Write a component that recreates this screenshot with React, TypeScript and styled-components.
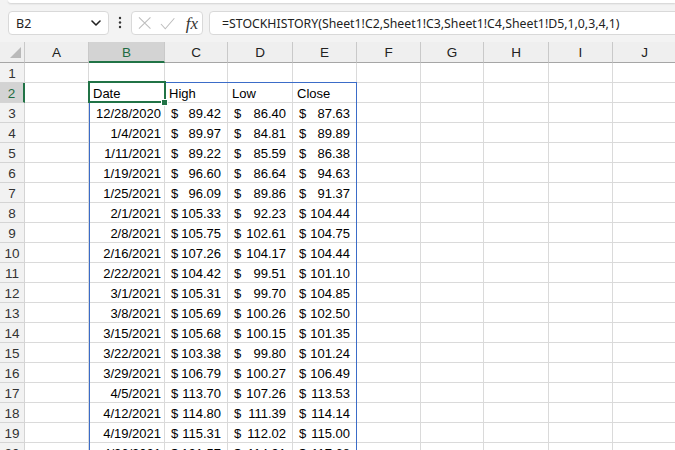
import React from "react";
import styled, { createGlobalStyle } from "styled-components";

const GlobalStyle = createGlobalStyle`
  html, body {
    margin: 0;
    padding: 0;
    background: #f3f3f3;
    overflow: hidden;
  }
`;

// column widths in px, corner first, then A..J
const COLS = [25, 64, 76, 63, 65, 64, 64, 63, 65, 64, 64];
const LETTERS = ["A", "B", "C", "D", "E", "F", "G", "H", "I", "J"];
const VISIBLE_ROWS = 20;

type Quote = [string, number, number, number];

const quotes: Quote[] = [
    ["12/28/2020", 89.42, 86.4, 87.63],
    ["1/4/2021", 89.97, 84.81, 89.89],
    ["1/11/2021", 89.22, 85.59, 86.38],
    ["1/19/2021", 96.6, 86.64, 94.63],
    ["1/25/2021", 96.09, 89.86, 91.37],
    ["2/1/2021", 105.33, 92.23, 104.44],
    ["2/8/2021", 105.75, 102.61, 104.75],
    ["2/16/2021", 107.26, 104.17, 104.44],
    ["2/22/2021", 104.42, 99.51, 101.1],
    ["3/1/2021", 105.31, 99.7, 104.85],
    ["3/8/2021", 105.69, 100.26, 102.5],
    ["3/15/2021", 105.68, 100.15, 101.35],
    ["3/22/2021", 103.38, 99.8, 101.24],
    ["3/29/2021", 106.79, 100.27, 106.49],
    ["4/5/2021", 113.7, 107.26, 113.53],
    ["4/12/2021", 114.8, 111.39, 114.14],
    ["4/19/2021", 115.31, 112.02, 115.0],
    ["4/26/2021", 121.57, 114.91, 117.68],
];

const Window = styled.div`
  width: 675px;
  height: 450px;
  overflow: hidden;
  display: flex;
  flex-direction: column;
  background: #f3f3f3;
`;

const RibbonEdge = styled.div`
  height: 3px;
  margin-left: 8px;
  background: #ffffff;
  border-bottom-left-radius: 6px;
  box-shadow: 0 1px 2px rgba(0, 0, 0, 0.14);
`;

const FormulaBar = styled.div`
  height: 39px;
  display: flex;
  align-items: flex-start;
  padding: 8px 0 0 8px;
  box-sizing: border-box;
  font-family: "Noto Sans", "Open Sans", sans-serif;
  color: #222;
`;

const Field = styled.div`
  height: 24px;
  box-sizing: border-box;
  background: #fff;
  border: 1px solid #d9d9d9;
  border-radius: 4px;
  display: flex;
  align-items: center;
`;

const NameBox = styled(Field)`
  width: 101px;
  padding: 0 7px 0 7px;
  justify-content: space-between;
  font-size: 12.5px;
`;

const Dots = styled.div`
  width: 22px;
  height: 24px;
  display: flex;
  align-items: center;
  justify-content: center;
`;

const ActionBox = styled(Field)`
  width: 72px;
  padding: 0 4px 0 6px;
  gap: 9px;
  margin-right: 6px;
`;

const Fx = styled.span`
  font-family: "Liberation Serif", "DejaVu Serif", serif;
  font-style: italic;
  font-size: 17px;
  color: #333;
  margin-left: 1px;
  line-height: 1;
`;

const FormulaInput = styled(Field)`
  flex: 1;
  margin-right: -8px;
  padding-left: 12px;
  font-size: 12.3px;
  white-space: nowrap;
`;

const Sheet = styled.div`
  position: relative;
  flex: 1;
  background: #fff;
  overflow: hidden;
`;

const Grid = styled.div<{ $cols: string }>`
  display: grid;
  grid-template-columns: ${(p) => p.$cols};
  grid-template-rows: 21px;
  grid-auto-rows: 20px;
  font-family: "Liberation Sans", Arial, sans-serif;
  font-size: 13px;
  color: #000;
`;

const Corner = styled.div`
  position: relative;
  background: #efefef;
  border-right: 1px solid #c9c9c9;
  border-bottom: 1px solid #a6a6a6;
  box-sizing: border-box;

  &::after {
    content: "";
    position: absolute;
    right: 3px;
    bottom: 4px;
    border-style: solid;
    border-width: 0 0 11px 11px;
    border-color: transparent transparent #b9b9b9 transparent;
  }
`;

const ColHeader = styled.div<{ $selected?: boolean }>`
  box-sizing: border-box;
  background: ${(p) => (p.$selected ? "#d3d3d3" : "#efefef")};
  color: ${(p) => (p.$selected ? "#1e6b41" : "#222")};
  border-right: 1px solid #c9c9c9;
  border-bottom: ${(p) => (p.$selected ? "2px solid #217346" : "1px solid #a6a6a6")};
  font-size: 13.5px;
  display: flex;
  justify-content: center;
  align-items: center;
  padding-top: 1px;
`;

const RowHeader = styled.div<{ $selected?: boolean }>`
  box-sizing: border-box;
  background: ${(p) => (p.$selected ? "#d3d3d3" : "#f2f2f2")};
  color: ${(p) => (p.$selected ? "#1e6b41" : "#333")};
  border-right: ${(p) => (p.$selected ? "2px solid #217346" : "1px solid #d4d4d4")};
  border-bottom: 1px solid #d4d4d4;
  font-size: 13.5px;
  display: flex;
  justify-content: center;
  align-items: center;
  padding-top: 2px;
`;

const Cell = styled.div<{ $align?: "left" | "right" }>`
  box-sizing: border-box;
  border-right: 1px solid #dadada;
  border-bottom: 1px solid #dadada;
  display: flex;
  align-items: center;
  justify-content: ${(p) => (p.$align === "right" ? "flex-end" : "flex-start")};
  padding: 2px 3px 0 4px;
  white-space: nowrap;
  overflow: hidden;
`;

const MoneyCell = styled(Cell)`
  justify-content: space-between;
  gap: 2px;
  padding: 2px 6px 0 6px;
`;

const Spill = styled.div`
  position: absolute;
  left: 89px;
  top: 40px;
  width: 268px;
  height: 500px;
  box-sizing: border-box;
  border: 1px solid #3b6cc8;
  pointer-events: none;
`;

const ActiveCell = styled.div`
  position: absolute;
  left: 88px;
  top: 39px;
  width: 78px;
  height: 22px;
  box-sizing: border-box;
  border: 2px solid #217346;
  pointer-events: none;
`;

const FillHandle = styled.div`
  position: absolute;
  left: 161px;
  top: 57px;
  width: 5px;
  height: 5px;
  background: #217346;
  border: 1px solid #fff;
`;

const Chevron = () => (
    <svg width="10" height="6" viewBox="0 0 10 6">
        <path d="M1 1l4 4 4-4" fill="none" stroke="#222" strokeWidth="1.6" strokeLinecap="round" strokeLinejoin="round" />
    </svg>
);

const VDots = () => (
    <svg width="4" height="14" viewBox="0 0 4 14">
        <circle cx="2" cy="2" r="1.2" fill="#333" />
        <circle cx="2" cy="6.5" r="1.2" fill="#333" />
        <circle cx="2" cy="11" r="1.2" fill="#333" />
    </svg>
);

const Cancel = () => (
    <svg width="14" height="14" viewBox="0 0 14 14">
        <path d="M1 1l12 12M13 1L1 13" stroke="#bdbdbd" strokeWidth="1.1" fill="none" />
    </svg>
);

const Enter = () => (
    <svg width="16" height="13" viewBox="0 0 16 13">
        <path d="M1 7l4.5 5L15 1" stroke="#bdbdbd" strokeWidth="1.1" fill="none" />
    </svg>
);

const money = (v: number) => v.toFixed(2);

const App = () => {
    const cols = COLS.map((w) => `${w}px`).join(" ");

    const renderRow = (r: number) => {
        const cells: React.ReactNode[] = [];
        cells.push(
            <RowHeader key="h" $selected={r === 2}>
                {r}
            </RowHeader>
        );
        LETTERS.forEach((letter) => {
            const key = `${letter}${r}`;
            if (r === 2 && letter === "B") cells.push(<Cell key={key}>Date</Cell>);
            else if (r === 2 && letter === "C") cells.push(<Cell key={key}>High</Cell>);
            else if (r === 2 && letter === "D") cells.push(<Cell key={key}>Low</Cell>);
            else if (r === 2 && letter === "E") cells.push(<Cell key={key}>Close</Cell>);
            else if (r >= 3 && "BCDE".includes(letter) && quotes[r - 3]) {
                const q = quotes[r - 3];
                if (letter === "B") {
                    cells.push(
                        <Cell key={key} $align="right">
                            {q[0]}
                        </Cell>
                    );
                } else {
                    const v = q["CDE".indexOf(letter) + 1] as number;
                    cells.push(
                        <MoneyCell key={key}>
                            <span>$</span>
                            <span>{money(v)}</span>
                        </MoneyCell>
                    );
                }
            } else cells.push(<Cell key={key} />);
        });
        return cells;
    };

    return (
        <>
            <GlobalStyle />
            <Window>
                <RibbonEdge />
                <FormulaBar>
                    <NameBox>
                        <span>B2</span>
                        <Chevron />
                    </NameBox>
                    <Dots>
                        <VDots />
                    </Dots>
                    <ActionBox>
                        <Cancel />
                        <Enter />
                        <Fx>fx</Fx>
                    </ActionBox>
                    <FormulaInput>
                        =STOCKHISTORY(Sheet1!C2,Sheet1!C3,Sheet1!C4,Sheet1!D5,1,0,3,4,1)
                    </FormulaInput>
                </FormulaBar>
                <Sheet>
                    <Grid $cols={cols}>
                        <Corner />
                        {LETTERS.map((l) => (
                            <ColHeader key={l} $selected={l === "B"}>
                                {l}
                            </ColHeader>
                        ))}
                        {Array.from({ length: VISIBLE_ROWS }, (_, i) => renderRow(i + 1))}
                    </Grid>
                    <Spill />
                    <ActiveCell />
                    <FillHandle />
                </Sheet>
            </Window>
        </>
    );
};

export default App;
